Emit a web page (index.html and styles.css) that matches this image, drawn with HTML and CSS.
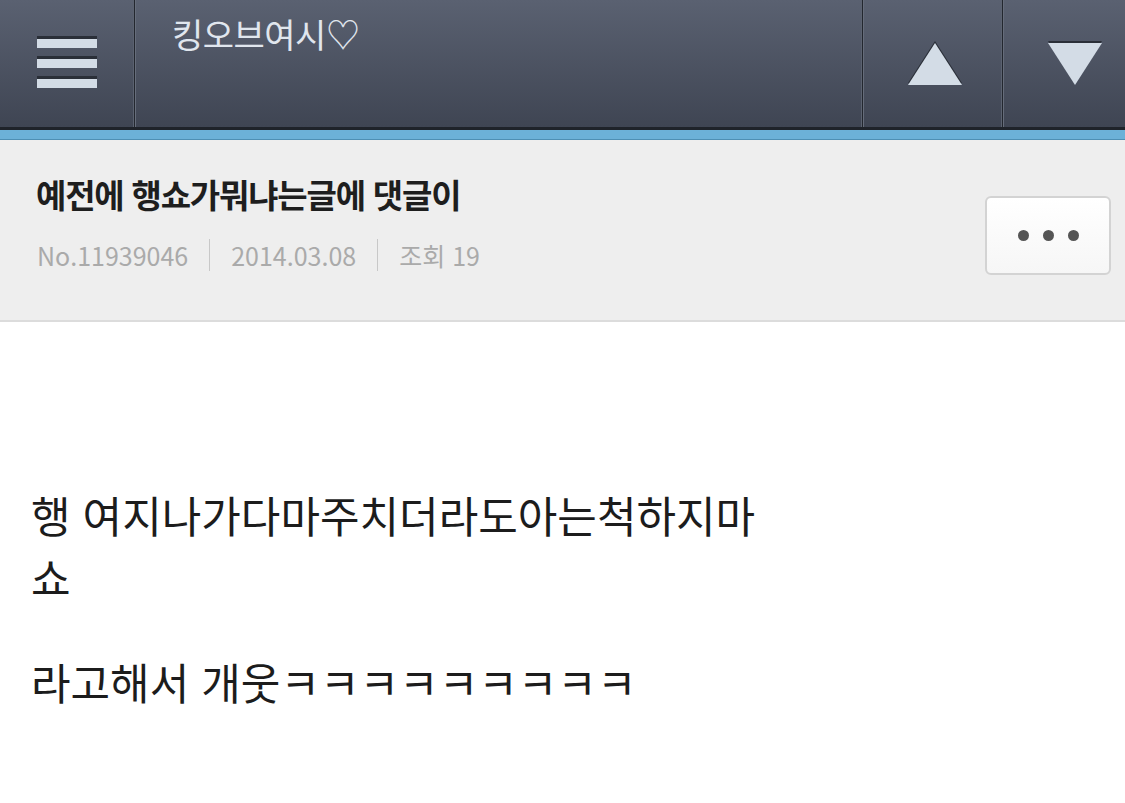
FILE: index.html
```html
<!DOCTYPE html>
<html lang="ko">
  <head>
    <meta charset="utf-8">
    <title>킹오브여시</title>
    <link rel="stylesheet" href="styles.css">
  </head>
  <body>
    <div class="topbar">
      <div class="cell menu">
        <span class="bar"></span>
        <span class="bar"></span>
        <span class="bar"></span>
      </div>
      <div class="cell board">킹오브여시♡</div>
      <div class="cell arrow up">
        <svg width="54" height="42" viewBox="0 0 54 42"><polygon points="27,0 54,42 0,42" /></svg>
      </div>
      <div class="cell arrow down">
        <svg width="54" height="42" viewBox="0 0 54 42"><polygon points="0,0 54,0 27,42" /></svg>
      </div>
    </div>

    <div class="post-head">
      <div class="post-info">
        <h1 class="post-title">예전에 행쇼가뭐냐는글에 댓글이</h1>
        <p class="post-meta">
          <span>No.11939046</span>
          <span class="sep"></span>
          <span>2014.03.08</span>
          <span class="sep"></span>
          <span>조회 19</span>
        </p>
      </div>
      <button class="more" type="button">
        <i></i><i></i><i></i>
      </button>
    </div>

    <div class="post-body">
      <p>행 여지나가다마주치더라도아는척하지마쇼</p>
      <p>라고해서 개웃ㅋㅋㅋㅋㅋㅋㅋㅋㅋ</p>
    </div>
  </body>
</html>
```

FILE: styles.css
```css
html,
body {
  margin: 0;
  padding: 0;
  background: #fff;
}

body {
  font-family: 'Noto Sans CJK KR', 'Roboto', sans-serif;
  color: #222;
}

/* top bar */
.topbar {
  display: flex;
  height: 127px;
  background: linear-gradient(#5a6171, #3f4553);
  border-bottom: 3px solid #1f232a;
  box-shadow: 0 9px 0 #6cb1d8, 0 10px 0 #4e8fb4;
  margin-bottom: 10px;
}

.cell {
  display: flex;
  align-items: center;
  justify-content: center;
  border-right: 1px solid #23272f;
  box-shadow: inset -1px 0 0 #5b6270;
}

.cell:last-child {
  border-right: none;
  box-shadow: none;
}

.topbar .cell + .cell {
  border-left: 1px solid #666d7b;
}

.menu {
  width: 134px;
  flex-direction: column;
  gap: 11px;
}

.menu .bar {
  display: block;
  width: 60px;
  height: 9px;
  background: #d3dce6;
  box-shadow: 0 -3px 0 #2a2f38;
}

.board {
  flex: 1;
  justify-content: flex-start;
  align-items: flex-start;
  padding: 9px 0 0 36px;
  font-size: 34px;
  letter-spacing: -0.5px;
  color: #e0e6ee;
}

.arrow {
  width: 138px;
}

.arrow.down {
  width: 121px;
}

.arrow svg {
  fill: #d3dce6;
  filter: drop-shadow(0 -2px 0 #2a2f38);
}

.arrow.up svg {
  margin-left: 4px;
}

.arrow.down svg {
  margin-left: 20px;
}

/* post header */
.post-head {
  display: flex;
  align-items: flex-start;
  justify-content: space-between;
  height: 146px;
  padding: 34px 14px 0 36px;
  background: #eeeeee;
  border-bottom: 2px solid #dcdcdc;
}

.post-title {
  margin: 0;
  font-size: 33px;
  font-weight: bold;
  letter-spacing: -1.2px;
  color: #1e1e1e;
  line-height: 40px;
}

.post-meta {
  display: flex;
  align-items: center;
  margin: 25px 0 0 1px;
  font-size: 25px;
  color: #aaaaaa;
  line-height: 30px;
}

.post-meta .sep {
  width: 1px;
  height: 32px;
  margin: 0 21px;
  background: #c8c8c8;
}

.more {
  display: flex;
  gap: 14px;
  align-items: center;
  justify-content: center;
  width: 126px;
  height: 79px;
  margin-top: 22px;
  padding: 0;
  border: 2px solid #d3d3d3;
  border-radius: 6px;
  background: linear-gradient(#ffffff, #f6f6f6);
}

.more i {
  width: 11px;
  height: 11px;
  border-radius: 50%;
  background: #555;
}

/* post body */
.post-body {
  width: 760px;
  padding: 161px 0 0 31px;
  font-size: 43px;
  line-height: 62px;
  color: #1c1c1c;
}

.post-body p {
  margin: 0 0 43px 0;
}
```
